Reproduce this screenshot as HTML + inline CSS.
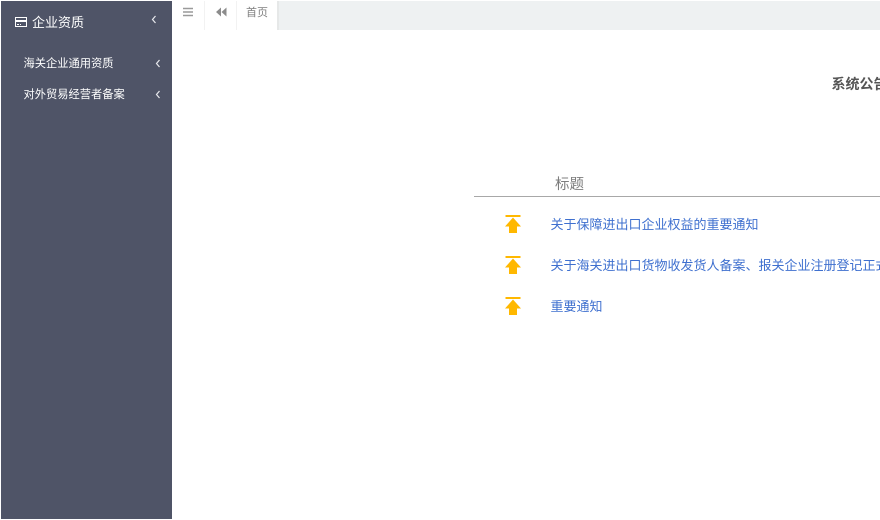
<!DOCTYPE html>
<html lang="zh">
<head>
<meta charset="utf-8">
<style>
html,body{margin:0;padding:0;width:880px;height:520px;overflow:hidden;background:#fff;font-family:"Liberation Sans","Noto Sans CJK SC",sans-serif}
.a{position:absolute;white-space:nowrap}
.t{filter:blur(.3px)}
#side{left:1px;top:1px;width:171px;height:518px;background:#4f5467}
.l{color:#3f70cf;font-size:13px;line-height:20px;left:550.500px}
</style>
</head>
<body>
<div class="a" id="side"></div>
<svg class="a" style="left:15px;top:17px" width="12" height="11" viewBox="0 0 12 11"><path d="M.5 .5H11.500V9.500H.5Z" fill="none" stroke="#fff"/><rect x="1" y="3" width="10" height="2" fill="#fff"/><rect x="2" y="7" width="2" height="1" fill="#fff"/><rect x="5" y="7" width="1" height="1" fill="#fff"/></svg>
<div class="a t" style="left:32px;top:13px;font-size:13px;line-height:20px;color:#fff">企业资质</div>
<svg class="a" style="left:151px;top:15px" width="6" height="9" viewBox="0 0 6 9"><path d="M4.500 1L1.500 4.500L4.500 8" fill="none" stroke="#e8e9ed" stroke-width="1.200"/></svg>
<div class="a t" style="left:23.500px;top:54px;font-size:11.250px;line-height:20px;color:#fff">海关企业通用资质</div>
<svg class="a" style="left:155px;top:59px" width="6" height="9" viewBox="0 0 6 9"><path d="M4.500 1L1.500 4.500L4.500 8" fill="none" stroke="#e8e9ed" stroke-width="1.200"/></svg>
<div class="a t" style="left:23.500px;top:85px;font-size:11.250px;line-height:20px;color:#fff">对外贸易经营者备案</div>
<svg class="a" style="left:155px;top:90px" width="6" height="9" viewBox="0 0 6 9"><path d="M4.500 1L1.500 4.500L4.500 8" fill="none" stroke="#e8e9ed" stroke-width="1.200"/></svg>

<div class="a" style="left:277px;top:1px;width:603px;height:29px;background:#eef1f2"></div>
<div class="a" style="left:277px;top:1px;width:2px;height:29px;background:#e6e8e8"></div>
<div class="a" style="left:204px;top:1px;width:1px;height:29px;background:#f2f2f2"></div>
<div class="a" style="left:236px;top:1px;width:1px;height:29px;background:#f2f2f2"></div>
<svg class="a" style="left:183px;top:7px" width="10" height="10" viewBox="0 0 10 10"><path d="M0 1.500H10M0 5H10M0 8.500H10" stroke="#9a9a9a" stroke-width="1.500" fill="none"/></svg>
<svg class="a" style="left:216px;top:7px" width="11" height="10" viewBox="0 0 11 10"><path d="M0 5L5 .5V9.500ZM5.500 5L10.500 .5V9.500Z" fill="#8c8c8c"/></svg>
<div class="a t" style="left:246px;top:3px;font-size:11px;line-height:20px;color:#808080">首页</div>

<div class="a t" style="left:831.500px;top:74px;font-size:14px;line-height:20px;font-weight:bold;color:#555">系统公告</div>
<div class="a t" style="left:555px;top:175px;font-size:14.500px;line-height:20px;color:#7d7d7d">标题</div>
<div class="a" style="left:474px;top:196px;width:406px;height:1px;background:#a8a8a8"></div>

<svg class="a" style="left:505px;top:215px" width="16" height="18" viewBox="0 0 16 18"><path d="M.5 0H15.500V2H.5ZM8 2.500L16 11.500H12V18H4V11.500H0Z" fill="#ffb800"/></svg>
<div class="a l t" style="top:215px">关于保障进出口企业权益的重要通知</div>
<svg class="a" style="left:505px;top:256px" width="16" height="18" viewBox="0 0 16 18"><path d="M.5 0H15.500V2H.5ZM8 2.500L16 11.500H12V18H4V11.500H0Z" fill="#ffb800"/></svg>
<div class="a l t" style="top:256px">关于海关进出口货物收发货人备案、报关企业注册登记正式</div>
<svg class="a" style="left:505px;top:297px" width="16" height="18" viewBox="0 0 16 18"><path d="M.5 0H15.500V2H.5ZM8 2.500L16 11.500H12V18H4V11.500H0Z" fill="#ffb800"/></svg>
<div class="a l t" style="top:297px">重要通知</div>
</body>
</html>
